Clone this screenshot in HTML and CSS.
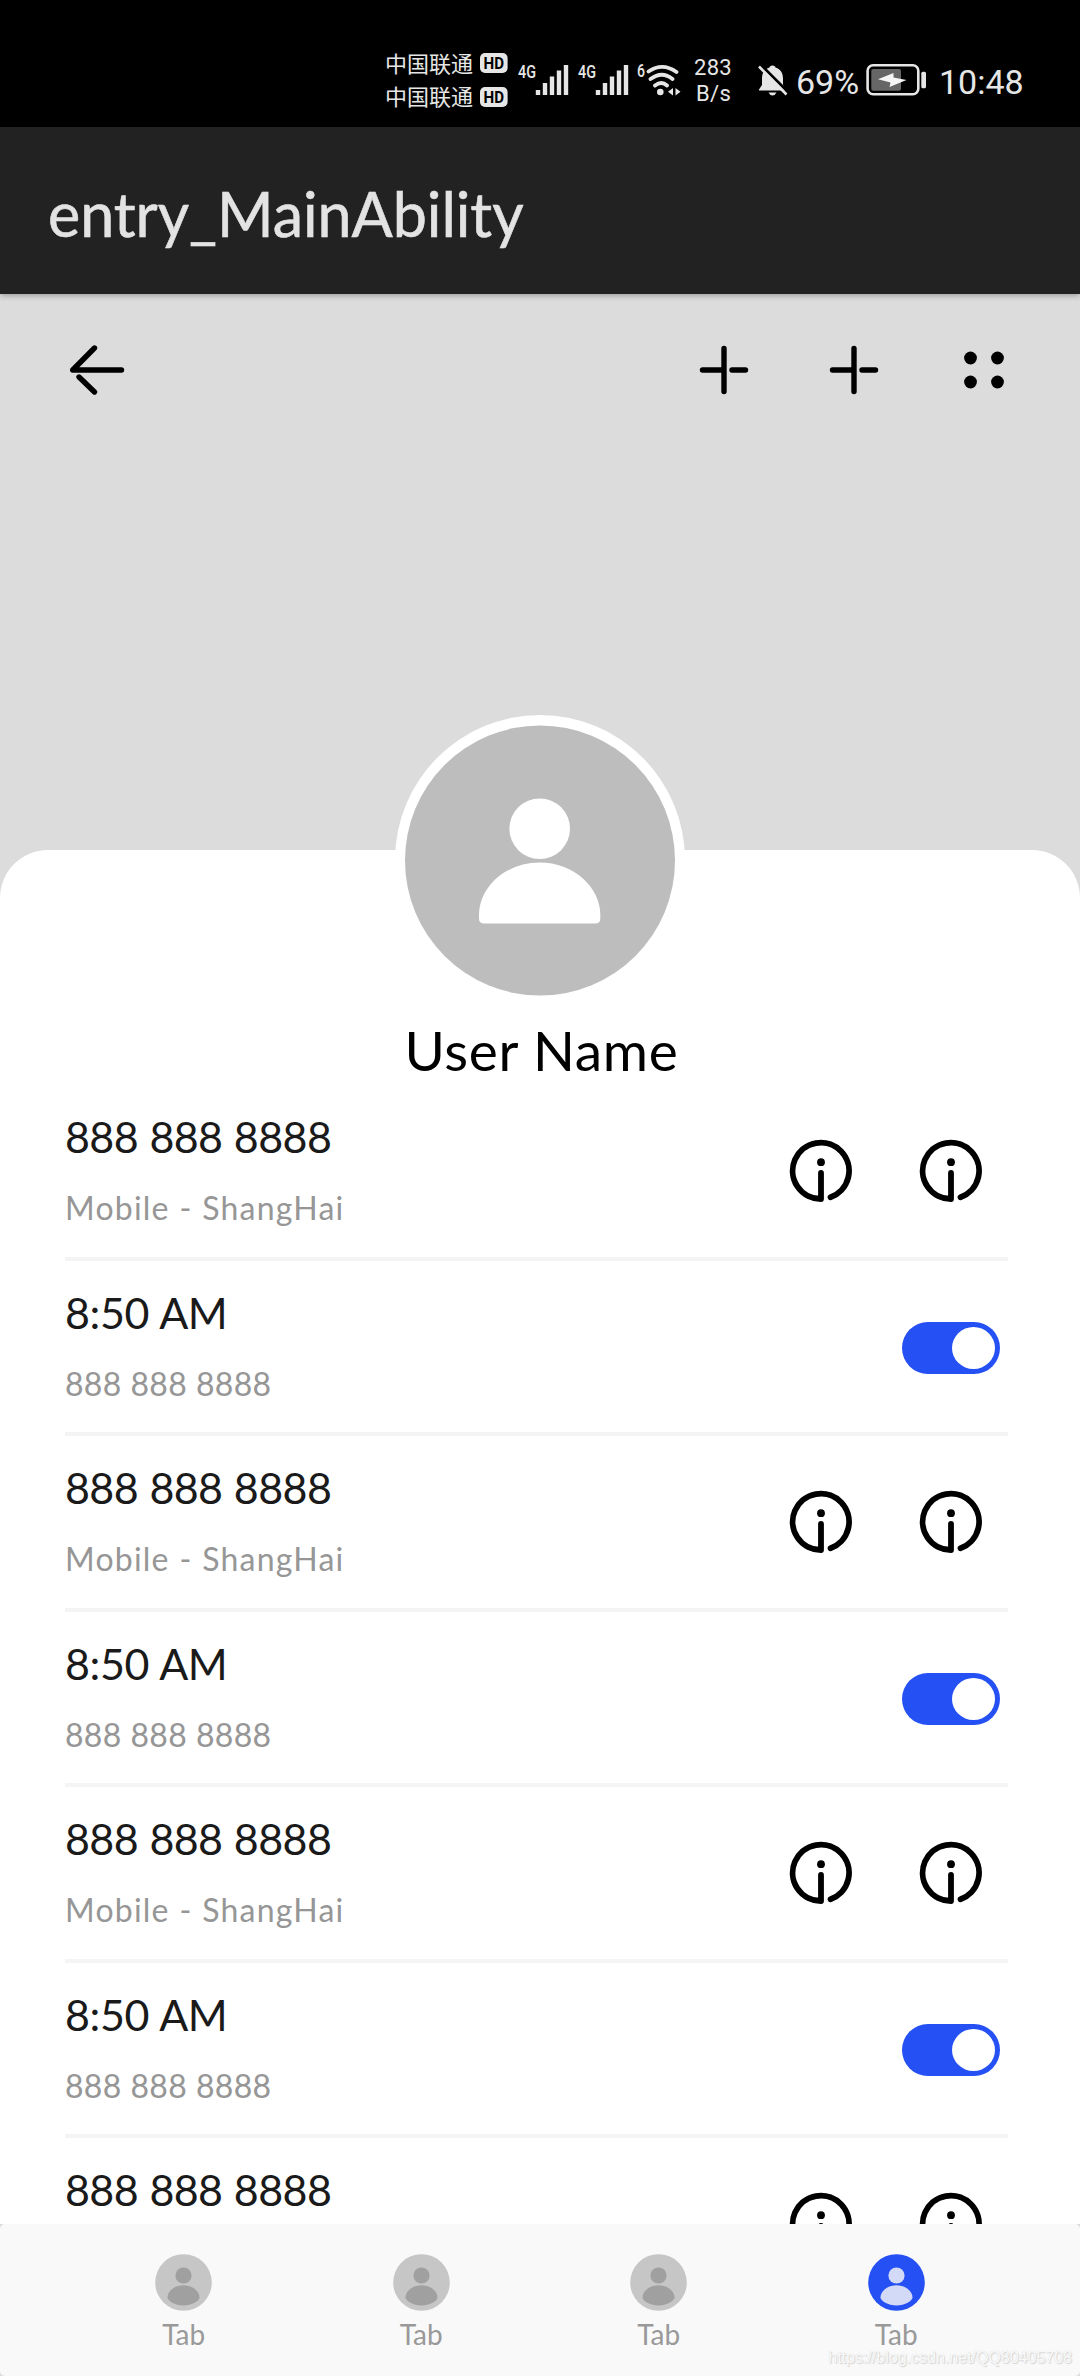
FILE: index.html
```
<!DOCTYPE html>
<html lang="en">
<head>
<meta charset="utf-8">
<title>entry_MainAbility</title>
<link rel="stylesheet" href="styles.css">
</head>
<body>
<svg class="defs" width="0" height="0" aria-hidden="true">
  <symbol id="info" viewBox="0 0 64 64">
    <path d="M32 34V60A28.2 28.2 0 1 1 41.5 58.300" fill="none" stroke="#000" stroke-width="5.800" stroke-linecap="round" stroke-linejoin="round"/>
    <circle cx="32" cy="23.200" r="3.900"/>
  </symbol>
  <symbol id="plus" viewBox="0 0 50 50">
    <path d="M25 3.500v43M3.500 25H25M33 25h13.500" fill="none" stroke="#000" stroke-width="5.400" stroke-linecap="round"/>
  </symbol>
  <symbol id="person" viewBox="0 0 57 57">
    <circle cx="28.500" cy="28.500" r="28.300" fill="var(--disc)"/>
    <circle cx="28.500" cy="21.500" r="8.100" fill="var(--figure)"/>
    <path d="M28.500 31.200c8.200 0 16 5.500 16 12.300 0 3.200-7.500 8-16 8s-16-4.800-16-8c0-6.800 7.800-12.300 16-12.300z" fill="var(--figure)"/>
  </symbol>
</svg>

<header class="status">
  <div class="carriers">
    <div class="carrier"><span>中国联通</span><svg width="28" height="20" viewBox="0 0 28 20"><rect width="27.600" height="20" rx="5" fill="#e6e6e6"/><text class="hd" x="3.500" y="16" textLength="20.500" lengthAdjust="spacingAndGlyphs">HD</text></svg></div>
    <div class="carrier"><span>中国联通</span><svg width="28" height="20" viewBox="0 0 28 20"><rect width="27.600" height="20" rx="5" fill="#e6e6e6"/><text class="hd" x="3.500" y="16" textLength="20.500" lengthAdjust="spacingAndGlyphs">HD</text></svg></div>
  </div>
  <svg class="signal" width="60" height="40" viewBox="518 60 60 40">
    <text class="gen" x="518" y="78" textLength="18" lengthAdjust="spacingAndGlyphs">4G</text>
    <path d="M538 95v-5M545 95V83M552 95V76.500M559 95V70.500M566 95V65" stroke="#e6e6e6" stroke-width="4.400"/>
  </svg>
  <svg class="signal" width="60" height="40" viewBox="518 60 60 40">
    <text class="gen" x="518" y="78" textLength="18" lengthAdjust="spacingAndGlyphs">4G</text>
    <path d="M538 95v-5M545 95V83M552 95V76.500M559 95V70.500M566 95V65" stroke="#e6e6e6" stroke-width="4.400"/>
  </svg>
  <svg class="wifi" width="46" height="40" viewBox="636 60 46 40">
    <text class="gen" x="637" y="76.500" textLength="8" lengthAdjust="spacingAndGlyphs">6</text>
    <g fill="none" stroke="#e6e6e6" stroke-width="3.800" stroke-linecap="round">
      <path d="M648.500 71.500q14-9.500 28 .5M650.500 79q11.500-8.500 22 0M655 85.500q6.500-5 12 0"/>
    </g>
    <circle cx="660.300" cy="92" r="3.300" fill="#e6e6e6"/>
    <path d="M673 88v7.500l-5-3.700zM675.500 88v7.500l5-3.700z" fill="#e6e6e6"/>
  </svg>
  <div class="speed"><span>283</span><span>B/s</span></div>
  <svg class="bell" width="32" height="34" viewBox="756 63 32 34">
    <path d="M771.500 65.500c-2 0-2.800 1-3 2-5.500 1.700-7.500 6-7.500 11v6.500l-3 4.500v1h27v-1l-3-4.500v-6.500c0-5-2-9.300-7.500-11-.2-1-1-2-3-2z" fill="#e6e6e6"/>
    <path d="M767.500 92.500h8q-1.500 3-4 3t-4-3z" fill="#e6e6e6"/>
    <path d="M759.500 64.500 788 93" stroke="#000" stroke-width="3"/>
    <path d="M758 66.500 785.500 94.500" stroke="#e6e6e6" stroke-width="2.600"/>
  </svg>
  <span class="percent">69%</span>
  <svg class="battery" width="62" height="34" viewBox="863 63 62 34">
    <rect x="865.600" y="65.300" width="50.700" height="29" rx="5.500" fill="none" stroke="#e6e6e6" stroke-width="2.600"/>
    <rect x="869.300" y="69" width="29.700" height="21.700" rx="2" fill="#666"/>
    <rect x="919.300" y="71.700" width="4.700" height="16.600" rx="1.500" fill="#e6e6e6"/>
    <path d="M891.500 73 876 79.200l12.500 3.300-1 4.500 17-7-13-2.500z" fill="#f5f5f5"/>
  </svg>
  <span class="clock">10:48</span>
</header>

<div class="titlebar"><h1>entry_MainAbility</h1></div>

<main class="page">
  <nav class="toolbar">
    <svg class="back" width="60" height="60" viewBox="0 0 60 60"><path d="M54.500 30H5.700L27.500 8M12 37 27.500 52" fill="none" stroke="#000" stroke-width="5.400" stroke-linecap="round" stroke-linejoin="round"/></svg>
    <div class="actions">
      <svg width="50" height="50"><use href="#plus"/></svg>
      <svg width="50" height="50"><use href="#plus"/></svg>
      <svg width="50" height="50" viewBox="0 0 50 50"><circle cx="11.500" cy="13" r="6.400"/><circle cx="38.500" cy="13" r="6.400"/><circle cx="11.500" cy="37" r="6.400"/><circle cx="38.500" cy="37" r="6.400"/></svg>
    </div>
  </nav>

  <section class="sheet">
    <svg class="avatar" width="290" height="290" viewBox="0 0 290 290">
      <circle cx="145" cy="145" r="145" fill="#fff"/>
      <circle cx="145" cy="145.500" r="135" fill="#bdbdbd"/>
      <circle cx="144.700" cy="113.700" r="30.300" fill="#fff"/>
      <path d="M84 200c0-28 27-52.500 60.700-52.500S205.300 172 205.300 200v3.500q0 5-5 5H89q-5 0-5-5z" fill="#fff"/>
    </svg>
    <h2>User Name</h2>
    <ul class="list">
      <li class="row"><div class="text"><p class="main">888 888 8888</p><p class="sub place">Mobile - ShangHai</p></div><div class="icons"><svg><use href="#info"/></svg><svg><use href="#info"/></svg></div></li>
      <li class="row"><div class="text"><p class="main time">8:50 AM</p><p class="sub">888 888 8888</p></div><span class="toggle"><i></i></span></li>
      <li class="row"><div class="text"><p class="main">888 888 8888</p><p class="sub place">Mobile - ShangHai</p></div><div class="icons"><svg><use href="#info"/></svg><svg><use href="#info"/></svg></div></li>
      <li class="row"><div class="text"><p class="main time">8:50 AM</p><p class="sub">888 888 8888</p></div><span class="toggle"><i></i></span></li>
      <li class="row"><div class="text"><p class="main">888 888 8888</p><p class="sub place">Mobile - ShangHai</p></div><div class="icons"><svg><use href="#info"/></svg><svg><use href="#info"/></svg></div></li>
      <li class="row"><div class="text"><p class="main time">8:50 AM</p><p class="sub">888 888 8888</p></div><span class="toggle"><i></i></span></li>
      <li class="row"><div class="text"><p class="main">888 888 8888</p></div><div class="icons"><svg><use href="#info"/></svg><svg><use href="#info"/></svg></div></li>
    </ul>
  </section>
</main>

<footer class="tabs">
  <div class="tab"><svg><use href="#person"/></svg><span>Tab</span></div>
  <div class="tab"><svg><use href="#person"/></svg><span>Tab</span></div>
  <div class="tab"><svg><use href="#person"/></svg><span>Tab</span></div>
  <div class="tab active"><svg><use href="#person"/></svg><span>Tab</span></div>
  <span class="watermark">https://blog.csdn.net/QQ80405708</span>
</footer>
</body>
</html>
```
FILE: styles.css
```
* { box-sizing: border-box; margin: 0; padding: 0; }

body {
  width: 1080px;
  height: 2376px;
  overflow: hidden;
  display: flex;
  flex-direction: column;
  background: #dcdcdc;
  font-family: Lato, "Noto Sans", sans-serif;
}

svg { display: block; flex: none; }
.defs { position: absolute; }

/* Status bar */
.status {
  flex: none;
  height: 127px;
  padding: 51px 0 0 385px;
  display: flex;
  align-items: flex-start;
  background: #000;
  color: #e6e6e6;
  font-family: Roboto, "Noto Sans CJK SC", sans-serif;
  white-space: nowrap;
}
.carriers { width: 133px; display: flex; flex-direction: column; gap: 9.500px; }
.carrier { height: 24px; display: flex; align-items: center; gap: 7px; font: 22px/24px "Noto Sans CJK SC", sans-serif; }
.carrier span { position: relative; top: -1.500px; }
.hd { font: bold 17px Roboto, sans-serif; fill: #000; }
.gen { font: 500 18px Roboto, sans-serif; fill: #e6e6e6; }
.signal { margin-top: 9px; }
.wifi { margin: 9px 12px 0 -2px; }
.speed {
  width: 64px;
  padding-top: 4px;
  display: flex;
  flex-direction: column;
  font-size: 22px;
  line-height: 26px;
  letter-spacing: 0.300px;
}
.speed span:last-child { padding-left: 2px; }
.bell { margin: 12px 0 0 -1px; }
.percent { width: 70px; padding: 11px 0 0 7px; font-size: 34px; line-height: 40px; }
.battery { margin: 12px 0 0 6px; }
.clock { margin-left: 12px; padding-top: 11px; font-size: 34px; line-height: 40px; }

/* Title bar */
.titlebar {
  flex: none;
  height: 167px;
  padding: 50px 0 0 48px;
  background: #222;
  color: #e3e3e3;
  box-shadow: 0 1px 6px rgba(0, 0, 0, 0.350);
  z-index: 1;
}
.titlebar h1 {
  font-size: 61px;
  font-weight: 400;
  line-height: 73px;
  letter-spacing: -0.050px;
  -webkit-text-stroke: 0.600px currentColor;
}

/* Page */
.page { flex: 1; min-height: 0; overflow: hidden; display: flex; flex-direction: column; }
.toolbar {
  height: 556px;
  flex: none;
  padding: 46px 71.500px 0 67px;
  display: flex;
  justify-content: space-between;
  align-items: flex-start;
}
.actions { height: 60px; display: flex; align-items: center; gap: 79.600px; }

.sheet {
  flex: none;
  height: 1600px;
  display: flex;
  flex-direction: column;
  align-items: center;
  background: #fff;
  border-radius: 48px 48px 0 0;
}
.avatar { margin-top: -135px; }
.sheet h2 {
  margin-top: 12px;
  padding-left: 3px;
  font-size: 55px;
  font-weight: 400;
  line-height: 66px;
  letter-spacing: 0.700px;
  color: #000;
}

.list { width: 943px; margin: 2px auto 0 65px; list-style: none; }
.row {
  height: 175.500px;
  display: flex;
  justify-content: space-between;
  align-items: center;
  border-bottom: 4px solid #f4f4f4;
}
.text { align-self: flex-start; padding-top: 26.400px; white-space: nowrap; }
.main { font-size: 43px; line-height: 52px; letter-spacing: -0.600px; word-spacing: 1px; color: #1a1a1a; }
.time { letter-spacing: -0.400px; }
.sub { margin-top: 26px; font-size: 32px; line-height: 38px; letter-spacing: 0.300px; word-spacing: 0.400px; color: #969696; }
.place { letter-spacing: 1.200px; }
.icons { display: flex; gap: 65.600px; padding-right: 25.500px; }
.icons svg { width: 64px; height: 64px; }
.toggle {
  width: 98px;
  height: 52px;
  margin: 3px 8.500px 0 0;
  padding: 5px;
  display: flex;
  justify-content: flex-end;
  border-radius: 26px;
  background: #2450f4;
}
.toggle i { width: 43px; height: 42px; border-radius: 50%; background: #fff; }

/* Tab bar */
.tabs {
  flex: none;
  position: relative;
  height: 152px;
  padding: 29.500px 65px 0;
  display: flex;
  background: #f9f9f9;
  border-radius: 5px;
}
.tab { --disc: #c6c6c6; --figure: #a0a0a0; flex: 1; display: flex; flex-direction: column; align-items: center; gap: 6.500px; }
.tab.active { --disc: #2450f4; --figure: #d2daf8; }
.tab svg { width: 57px; height: 57px; }
.tab span { font-size: 28px; line-height: 34px; color: #999; }
.watermark {
  position: absolute;
  right: 8px;
  bottom: 8px;
  font: 16px/20px "Liberation Sans", sans-serif;
  color: #fafafa;
  text-shadow: 0 0 1px #d0d0d0, 1px 1px 1px #d4d4d4;
}
```
